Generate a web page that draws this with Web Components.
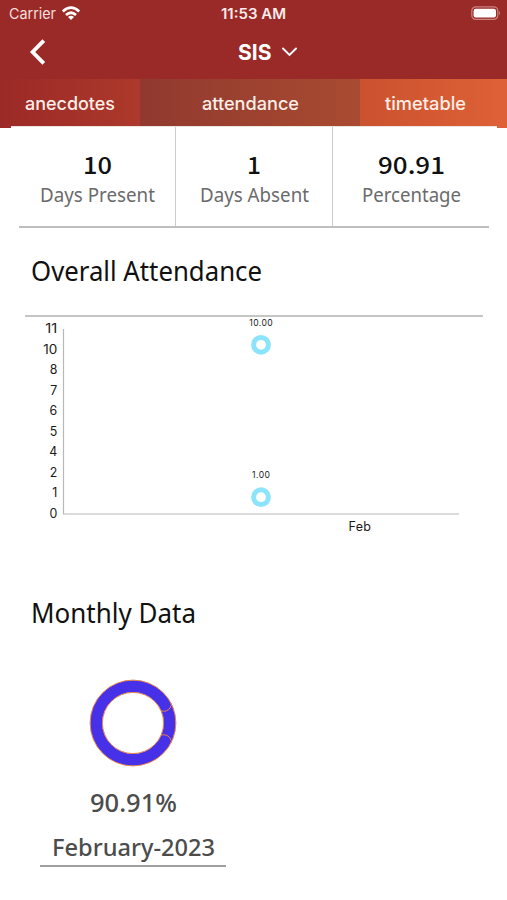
<!DOCTYPE html>
<html lang="en">
<head>
<meta charset="utf-8">
<title>Attendance</title>
<style>
html, body { margin: 0; background: #fff; }
body { width: 507px; height: 900px; overflow: hidden; font-family: Inter, "Liberation Sans", sans-serif; }
</style>
</head>
<body>
<attendance-app></attendance-app>
<script>
const define = (name, html, setup) => {
  const template = document.createElement('template');
  template.innerHTML = html;
  customElements.define(name, class extends HTMLElement {
    connectedCallback() {
      if (this.shadowRoot) return;
      this.attachShadow({ mode: 'open' }).append(template.content.cloneNode(true));
      if (setup) setup(this, this.shadowRoot);
    }
  });
};

// A single line of text set to an exact measure: w = width, h = box height, b = baseline.
define('fit-text', `<style>
:host { display: block; flex: none; }
svg { display: block; overflow: visible; }
text { fill: currentColor; }
</style><svg><text></text></svg>`, (el, root) => {
  const svg = root.querySelector('svg'), text = root.querySelector('text');
  const w = el.getAttribute('w');
  svg.setAttribute('width', w);
  svg.setAttribute('height', el.getAttribute('h'));
  text.setAttribute('y', el.getAttribute('b'));
  text.setAttribute('textLength', w);
  text.setAttribute('lengthAdjust', 'spacingAndGlyphs');
  text.textContent = el.getAttribute('text');
});

define('status-bar', `<style>
:host { display: grid; grid-template-columns: 1fr auto 1fr; height: 28px; color: #f6dfdd; padding: 0 6px 0 9px; align-items: start; }
.left { display: flex; gap: 5px; font-size: 15px; }
.wifi { margin-top: 6px; }
.time { color: #fbeceb; font-size: 14.5px; font-weight: 600; margin-left: -3px; }
.battery { justify-self: end; margin-top: 6px; }
svg { display: block; }
</style>
<div class="left"><fit-text text="Carrier" w="47" h="28" b="19"></fit-text>
<svg class="wifi" width="20" height="15" viewBox="0 0 20 15" fill="none" stroke="#fff" stroke-width="2.7"><path d="M1.8 5.4Q10-2 18.2 5.4M5 9Q10 4.5 15 9"/><path d="M10 14L7 10.9Q10 8.6 13 10.9Z" fill="#fff" stroke="none"/></svg></div>
<fit-text class="time" text="11:53 AM" w="65" h="28" b="19"></fit-text>
<svg class="battery" width="30" height="14" viewBox="0 0 30 14"><rect x=".8" y=".8" width="26" height="12.6" rx="4" fill="none" stroke="#c98480" stroke-width="1.2"/><rect x="2.6" y="2.7" width="22.4" height="8.8" rx="2.2" fill="#fff"/><path d="M28 5Q30 7 28 9Z" fill="#c98480"/></svg>`);

define('nav-bar', `<style>
:host { display: grid; grid-template-columns: 1fr auto 1fr; height: 51px; color: #fff; }
.back { margin: 11px 0 0 29px; }
.title { display: flex; gap: 10px; font-size: 21px; font-weight: 700; margin-left: 28px; }
.chev { margin-top: 19px; }
svg { display: block; }
</style>
<svg class="back" width="18" height="26" viewBox="0 0 18 26" fill="none" stroke="#fff" stroke-width="3.8"><path d="M14.8 1.6L3.6 13L14.8 24.4"/></svg>
<div class="title"><fit-text text="SIS" w="33.5" h="51" b="32"></fit-text><svg class="chev" width="15" height="10" viewBox="0 0 15 10" fill="none" stroke="#fff" stroke-width="1.9" stroke-linecap="round"><path d="M1 1.5L7.5 8L14 1.5"/></svg></div><span></span>`);

define('tab-bar', `<style>
:host { display: grid; grid-template-columns: 140px 220px 147px; height: 49px; color: #fdeee8; font-size: 18px; font-weight: 500; }
div { display: flex; justify-content: center; }
.a { background: linear-gradient(90deg, #9b2926, #ad392c); }
.b { background: linear-gradient(90deg, #91392f, #a94b31); }
.c { background: linear-gradient(90deg, #cb522f, #de6136); padding-right: 16px; }
</style>
<div class="a"><fit-text text="anecdotes" w="90" h="48" b="31"></fit-text></div>
<div class="b"><fit-text text="attendance" w="97" h="48" b="31"></fit-text></div>
<div class="c"><fit-text text="timetable" w="81" h="48" b="31"></fit-text></div>`);

define('stat-cell', `<style>
:host { display: flex; flex-direction: column; align-items: center; font-family: "Noto Sans", sans-serif; }
.value { font-family: "Noto Sans CJK SC", sans-serif; font-size: 23px; font-weight: 500; color: #111; }
.label { font-size: 20px; color: #6b6b6b; }
</style><fit-text class="value" h="54" b="47"></fit-text><fit-text class="label" h="30" b="21"></fit-text>`, (el, root) => {
  for (const part of ['value', 'label']) {
    const node = root.querySelector('.' + part), [text, w] = el.getAttribute(part).split('|');
    node.replaceWith(Object.assign(document.createElement('div'), { className: part, innerHTML: `<fit-text text="${text}" w="${w}" h="${node.getAttribute('h')}" b="${node.getAttribute('b')}"></fit-text>` }));
  }
});

define('stat-row', `<style>
:host { display: grid; grid-template-columns: 156px 157px 157px; height: 99px; border-bottom: 2px solid #bebebe; }
stat-cell { box-sizing: border-box; }
stat-cell + stat-cell { border-left: 1px solid #ccc; }
</style>
<stat-cell value="10|29" label="Days Present|115"></stat-cell>
<stat-cell value="1|14" label="Days Absent|109"></stat-cell>
<stat-cell value="90.91|67" label="Percentage|99"></stat-cell>`);

define('section-title', `<style>
:host { display: block; padding-left: 20px; font: 27px "Noto Sans", sans-serif; color: #111; }
</style><slot></slot>`);

define('attendance-chart', `<style>
:host { display: block; border-top: 2px solid #c4c6c4; width: 458px; }
svg { display: block; overflow: visible; font-family: Inter, sans-serif; fill: #1a1a1a; }
.axis text { font-size: 12.4px; text-anchor: end; }
.points text { font-size: 8.6px; text-anchor: middle; }
</style>
<svg width="458" height="225" viewBox="25 317 458 225">
<path d="M63.5 329V514H459" fill="none" stroke="#b8b8b8" stroke-width="1.2"/>
<g class="axis"></g>
<g class="points"><circle cx="261" cy="344.8" r="7.4" fill="none" stroke="#8ce4fc" stroke-width="5"/><text x="261" y="326" textLength="23.5">10.00</text>
<circle cx="261" cy="497.2" r="7.4" fill="none" stroke="#8ce4fc" stroke-width="5"/><text x="261" y="478" textLength="18">1.00</text></g>
<text x="348.5" y="531" font-size="12.5" textLength="22.5">Feb</text>
</svg>`, (el, root) => {
  root.querySelector('.axis').innerHTML = [11, 10, 8, 7, 6, 5, 4, 2, 1, 0]
    .map((n, i) => `<text x="57.3" y="${(333 + i * 20.5).toFixed(1)}"${n > 9 ? ` textLength="${n === 11 ? 12 : 14}" lengthAdjust="spacingAndGlyphs"` : ''}>${n}</text>`).join('');
});

define('month-card', `<style>
:host { display: flex; flex-direction: column; align-items: center; width: 186px; font: 500 25px "Noto Sans", sans-serif; color: #4c4c4c; border-bottom: 2px solid #a0a0a0; }
.month { font-size: 24px; }
svg { display: block; }
</style>
<svg width="88" height="88" viewBox="-44 -44 88 88">
<circle r="36.7" fill="none" stroke="#4630e8" stroke-width="12"/>
<g fill="none" stroke="#e5824b" stroke-width="1"><circle r="42.9"/><circle r="30.6"/><path d="M28.3-12.2Q33.5-10.5 37-15Q39-18 38.2-20M28.3 12.2Q33.5 10.5 37 15Q39 18 38.2 20"/></g>
</svg>
<fit-text text="90.91%" w="87" h="54" b="45"></fit-text>
<fit-text class="month" text="February-2023" w="163" h="44" b="35"></fit-text>`);

define('attendance-app', `<style>
:host { display: flex; flex-direction: column; height: 900px; background: #fff; }
header { background: #9a2a27; height: 79px; flex: none; }
main { position: relative; margin: -2px 10px 0 11px; background: #fff; flex: 1; border-top: 1px solid #eee4df; }
stat-row { margin-left: 8px; width: 470px; }
.overall { margin-top: 24px; }
attendance-chart { margin: 21px 0 0 14px; }
.monthly { margin-top: 50px; }
month-card { margin: 44px 0 0 29px; }
</style>
<header><status-bar></status-bar><nav-bar></nav-bar></header>
<tab-bar></tab-bar>
<main>
<stat-row></stat-row>
<section-title class="overall"><fit-text text="Overall Attendance" w="231" h="42" b="29"></fit-text></section-title>
<attendance-chart></attendance-chart>
<section-title class="monthly"><fit-text text="Monthly Data" w="165" h="43" b="31"></fit-text></section-title>
<month-card></month-card>
</main>`);
</script>
</body>
</html>
